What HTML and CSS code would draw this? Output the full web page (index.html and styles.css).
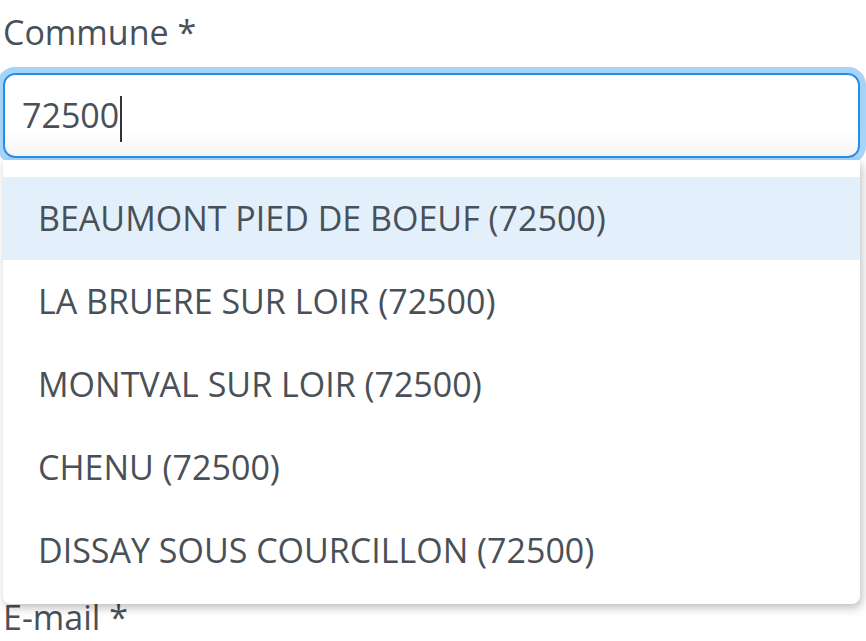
FILE: index.html
```html
<!DOCTYPE html>
<html>

<head>
    <meta charset="UTF-8">
    <title>Commune</title>
    <link rel="stylesheet" href="styles.css">
</head>

<body>
    <div class="form">
        <div class="field">
            <label class="field-label">Commune *</label>
            <div class="input-wrap">
                <div class="input focused">72500<span class="caret"></span></div>
                <ul class="suggestions">
                    <li class="active">BEAUMONT PIED DE BOEUF (72500)</li>
                    <li>LA BRUERE SUR LOIR (72500)</li>
                    <li>MONTVAL SUR LOIR (72500)</li>
                    <li>CHENU (72500)</li>
                    <li>DISSAY SOUS COURCILLON (72500)</li>
                </ul>
            </div>
        </div>

        <div class="field next">
            <label class="field-label">E-mail *</label>
        </div>
    </div>
</body>

</html>
```

FILE: styles.css
```css
body {
    margin: 0;
    font-family: "Open Sans", "Noto Sans", sans-serif;
    color: #495057;
    background-color: white;
    overflow: hidden;
}

.form {
    padding: 0 6px 0 3px;
}

.field-label {
    display: block;
    font-size: 34px;
    line-height: 51px;
    margin-top: 7px;
    padding-left: 0;
}

.input-wrap {
    position: relative;
    margin-top: 15px;
}

.input {
    box-sizing: border-box;
    height: 85px;
    padding: 0 17px;
    font-size: 34px;
    line-height: 81px;
    border: 2px solid #2190ea;
    border-radius: 12px;
    background: linear-gradient(to bottom, white 70%, #f4f4f4);
}

.input.focused {
    box-shadow: 0 0 0 6px #a6d4f8;
}

.caret {
    display: inline-block;
    width: 2px;
    height: 46px;
    background-color: #333;
    vertical-align: middle;
    margin-left: 1px;
}

.suggestions {
    position: absolute;
    top: 87px;
    left: 0;
    right: 0;
    margin: 0;
    padding: 17px 0 12px;
    list-style: none;
    background-color: white;
    border-radius: 0 0 8px 8px;
    box-shadow: 2px 4px 10px rgba(0, 0, 0, 0.25);
}

.suggestions li {
    height: 83px;
    line-height: 83px;
    padding-left: 35px;
    font-size: 34px;
}

.suggestions li.active {
    background-color: #e3f0fb;
}

.next {
    margin-top: 434px;
}
```
